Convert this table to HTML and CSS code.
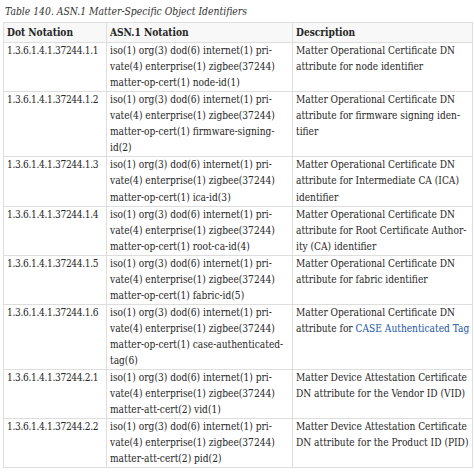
FILE: index.html
```html
<!DOCTYPE html>
<html lang="en">
<head>
<meta charset="utf-8">
<link rel="stylesheet" href="styles.css">
</head>
<body>
<div class="page">
<table class="oid">
<caption class="title">Table 140. ASN.1 Matter-Specific Object Identifiers</caption>
<colgroup><col class="c1"><col class="c2"><col class="c3"></colgroup>
<thead>
<tr><th>Dot Notation</th><th>ASN.1 Notation</th><th>Description</th></tr>
</thead>
<tbody>
<tr><td class="dot">1.3.6.1.4.1.37244.1.1</td><td>iso(1) org(3) dod(6) internet(1) pri-<br>vate(4) enterprise(1) zigbee(37244)<br>matter-op-cert(1) node-id(1)</td><td>Matter Operational Certificate DN<br>attribute for node identifier</td></tr>
<tr><td class="dot">1.3.6.1.4.1.37244.1.2</td><td>iso(1) org(3) dod(6) internet(1) pri-<br>vate(4) enterprise(1) zigbee(37244)<br>matter-op-cert(1) firmware-signing-<br>id(2)</td><td>Matter Operational Certificate DN<br>attribute for firmware signing iden-<br>tifier</td></tr>
<tr><td class="dot">1.3.6.1.4.1.37244.1.3</td><td>iso(1) org(3) dod(6) internet(1) pri-<br>vate(4) enterprise(1) zigbee(37244)<br>matter-op-cert(1) ica-id(3)</td><td>Matter Operational Certificate DN<br>attribute for Intermediate CA (ICA)<br>identifier</td></tr>
<tr><td class="dot">1.3.6.1.4.1.37244.1.4</td><td>iso(1) org(3) dod(6) internet(1) pri-<br>vate(4) enterprise(1) zigbee(37244)<br>matter-op-cert(1) root-ca-id(4)</td><td>Matter Operational Certificate DN<br>attribute for Root Certificate Author-<br>ity (CA) identifier</td></tr>
<tr><td class="dot">1.3.6.1.4.1.37244.1.5</td><td>iso(1) org(3) dod(6) internet(1) pri-<br>vate(4) enterprise(1) zigbee(37244)<br>matter-op-cert(1) fabric-id(5)</td><td>Matter Operational Certificate DN<br>attribute for fabric identifier</td></tr>
<tr><td class="dot">1.3.6.1.4.1.37244.1.6</td><td>iso(1) org(3) dod(6) internet(1) pri-<br>vate(4) enterprise(1) zigbee(37244)<br>matter-op-cert(1) case-authenticated-<br>tag(6)</td><td>Matter Operational Certificate DN<br>attribute for <a class="link" href="#">CASE Authenticated Tag</a></td></tr>
<tr><td class="dot">1.3.6.1.4.1.37244.2.1</td><td>iso(1) org(3) dod(6) internet(1) pri-<br>vate(4) enterprise(1) zigbee(37244)<br>matter-att-cert(2) vid(1)</td><td>Matter Device Attestation Certificate<br>DN attribute for the Vendor ID (VID)</td></tr>
<tr><td class="dot">1.3.6.1.4.1.37244.2.2</td><td>iso(1) org(3) dod(6) internet(1) pri-<br>vate(4) enterprise(1) zigbee(37244)<br>matter-att-cert(2) pid(2)</td><td>Matter Device Attestation Certificate<br>DN attribute for the Product ID (PID)</td></tr>
</tbody>
</table>
</div>
</body>
</html>
```
FILE: styles.css
```css
html, body {
  margin: 0;
  padding: 0;
  background: #ffffff;
}
.page {
  padding: 3px 3px 0 3px;
}
.oid {
  font-family: "DejaVu Serif Condensed", "DejaVu Serif", serif;
  font-stretch: semi-condensed;
  font-size: 10.1px;
  line-height: 16.05px;
  color: #262626;
  border-collapse: collapse;
  table-layout: fixed;
  width: 469px;
}
.title {
  caption-side: top;
  text-align: left;
  font-style: italic;
  font-size: 10.3px;
  color: #333333;
  padding: 0 0 3px 2px;
  white-space: nowrap;
}
.c1 { width: 103px; }
.c2 { width: 186px; }
.c3 { width: 180px; }
.oid th,
.oid td {
  border: 1px solid #dedede;
  text-align: left;
  vertical-align: top;
  white-space: nowrap;
  overflow: visible;
}
.oid th {
  background: #f7f8f7;
  font-weight: bold;
  padding: 2px 3px 1px 3px;
}
.oid td {
  padding: 0 3px 0 3px;
}
.oid td.dot {
  letter-spacing: -0.33px;
}
.link {
  color: #2156a5;
  text-decoration: none;
}
```
